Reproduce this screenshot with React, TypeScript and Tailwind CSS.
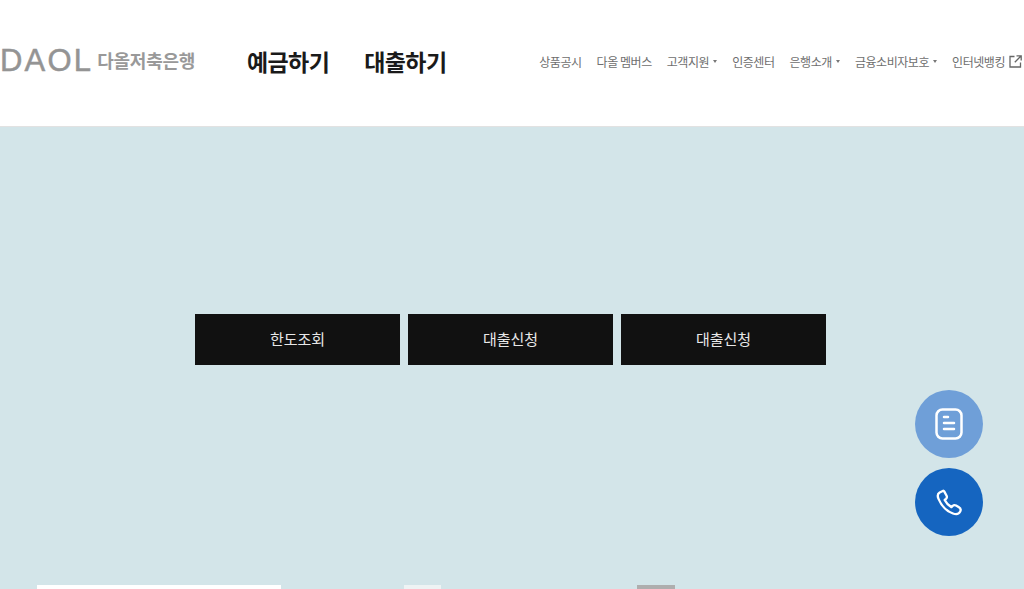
import React from 'react';

const FONT = "font-['Noto_Sans_CJK_KR','Noto_Sans',sans-serif]";

const navItems = [
  { label: '상품공시' },
  { label: '다올 멤버스' },
  { label: '고객지원', caret: true },
  { label: '인증센터' },
  { label: '은행소개', caret: true },
  { label: '금융소비자보호', caret: true },
];

function Caret() {
  return <span className="ml-[4px] h-0 w-0 border-x-[2.5px] border-t-[3px] border-x-transparent border-t-[#777]" />;
}

function NavLink({ label, caret }: { label: string; caret?: boolean }) {
  return (
    <a className="flex items-center whitespace-nowrap text-[12px] tracking-[-0.45px] text-[#6e6e6e]">
      {label}
      {caret && <Caret />}
    </a>
  );
}

function Header() {
  return (
    <header className="flex h-[127px] items-center border-b border-[#e2e2e2] bg-white pb-[4px]">
      <div className="flex w-[197px] shrink-0 items-center pb-[1px]">
        <span className="font-['Liberation_Sans',sans-serif] text-[31px] leading-none tracking-[2.2px] text-[#949494] [-webkit-text-stroke:0.5px_#949494]">DAOL</span>
        <span className="ml-[4px] whitespace-nowrap text-[18px] font-bold tracking-[-0.25px] text-[#999]">다올저축은행</span>
      </div>
      <nav className="ml-[50px] flex gap-[35px]">
        <a className="whitespace-nowrap text-[23px] font-bold tracking-[-0.6px] text-[#1a1a1a]">예금하기</a>
        <a className="whitespace-nowrap text-[23px] font-bold tracking-[-0.6px] text-[#1a1a1a]">대출하기</a>
      </nav>
      <nav className="ml-auto mr-[2px] mt-[1px] flex items-center gap-[15px]">
        {navItems.map((item) => (
          <NavLink key={item.label} label={item.label} caret={item.caret} />
        ))}
        <a className="flex items-center whitespace-nowrap text-[12px] tracking-[-0.45px] text-[#6e6e6e]">
          인터넷뱅킹
          <svg className="ml-[4px]" width="13" height="13" viewBox="0 0 13 13" fill="none" stroke="#666" strokeWidth="1.3">
            <path d="M5.5 1.5H1v10.5h10.5V7.5" />
            <path d="M7.5.8h4.7v4.7M12 1 5.8 7.2" />
          </svg>
        </a>
      </nav>
    </header>
  );
}

function ActionButton({ label }: { label: string }) {
  return (
    <button className="flex h-[51px] w-[205px] items-center justify-center bg-[#111111] text-[15px] text-[#e8e8e8]">
      {label}
    </button>
  );
}

function FloatingButtons() {
  return (
    <div className="absolute right-[41px] top-[263px] flex flex-col gap-[10px]">
      <button className="flex h-[68px] w-[68px] items-center justify-center rounded-full bg-[#6f9fd8]">
        <svg width="28" height="32" viewBox="0 0 28 32" fill="none" stroke="white" strokeWidth="2.5" strokeLinecap="round">
          <rect x="1.5" y="1.5" width="25" height="29" rx="6" />
          <path d="M9 9h4M9 15h10M9 21h10" />
        </svg>
      </button>
      <button className="flex h-[68px] w-[68px] items-center justify-center rounded-full bg-[#1565c0]">
        <svg width="27" height="27" viewBox="0 0 28 28" fill="none" stroke="white" strokeWidth="2.4" strokeLinejoin="round">
          <path d="M7 2 3.8 3.6C1.8 4.8 1.4 7.4 2.6 10.2 5.4 17 11 23 17.6 25.4c3.4 1.2 6.4.4 7.6-2.2.8-1.8.2-3.2-1.4-4.2l-3-1.8c-1.4-.8-2.6-.6-3.6.4l-1.2 1.2c-3-1.6-5.4-4.2-7-7.4l1.4-1.2c1-1 1.2-2 .6-3.2L8.8 3C8.4 2 7.8 1.6 7 2Z" />
        </svg>
      </button>
    </div>
  );
}

export default function App() {
  return (
    <div className={`flex h-[589px] w-full flex-col overflow-hidden ${FONT}`}>
      <Header />
      <main className="relative flex flex-1 flex-col bg-[#d3e5e9]">
        <div className="ml-[195px] mt-[187px] flex gap-[8px]">
          <ActionButton label="한도조회" />
          <ActionButton label="대출신청" />
          <ActionButton label="대출신청" />
        </div>
        <FloatingButtons />
        {/* 하단 카드 윗부분만 보임 */}
        <div className="mt-auto flex h-[4px] pl-[37px]">
          <div className="w-[244px] bg-white" />
          <div className="ml-[123px] w-[37px] bg-[#eef3f4]" />
          <div className="ml-[196px] w-[38px] bg-[#aeaeae]" />
        </div>
      </main>
    </div>
  );
}
